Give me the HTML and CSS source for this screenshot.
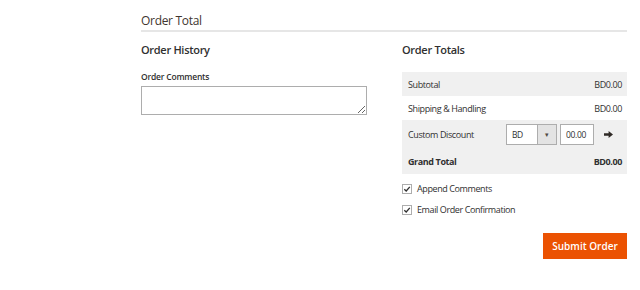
FILE: index.html
```html
<!DOCTYPE html>
<html lang="en">

<head>
    <meta charset="UTF-8">
    <meta name="viewport" content="width=device-width, initial-scale=1.0">
    <title>Order Total</title>
    <link rel="stylesheet" href="styles.css">
</head>

<body>
    <div class="order_total">
        <div class="section_title">Order Total</div>
        <div class="columns">
            <!-- 左侧：订单历史 -->
            <div class="history">
                <h3>Order History</h3>
                <label class="field_label" for="comment">Order Comments</label>
                <textarea id="comment" class="comment"></textarea>
            </div>
            <!-- 右侧：订单合计 -->
            <div class="totals">
                <h3>Order Totals</h3>
                <div class="totals_table">
                    <div class="row gray">
                        <span>Subtotal</span>
                        <span>BD0.00</span>
                    </div>
                    <div class="row">
                        <span>Shipping &amp; Handling</span>
                        <span>BD0.00</span>
                    </div>
                    <div class="row gray discount">
                        <span>Custom Discount</span>
                        <div class="discount_ctrl">
                            <div class="currency">
                                <span class="currency_val">BD</span>
                                <span class="currency_btn">&#9662;</span>
                            </div>
                            <input type="text" class="amount" value="00.00">
                            <svg class="go" width="9" height="7" viewBox="0 0 9 7">
                                <path d="M0 2.2 H4.6 V0 L9 3.5 L4.6 7 V4.8 H0 Z" fill="#2f2a26" />
                            </svg>
                        </div>
                    </div>
                    <div class="row gray grand">
                        <span>Grand Total</span>
                        <span>BD0.00</span>
                    </div>
                </div>
                <label class="check">
                    <span class="box"><svg width="8" height="8" viewBox="0 0 8 8"><path d="M1.3 4.2 L3.2 6 L6.8 1.8" fill="none" stroke="#303030" stroke-width="1.3" /></svg></span>
                    Append Comments
                </label>
                <label class="check">
                    <span class="box"><svg width="8" height="8" viewBox="0 0 8 8"><path d="M1.3 4.2 L3.2 6 L6.8 1.8" fill="none" stroke="#303030" stroke-width="1.3" /></svg></span>
                    Email Order Confirmation
                </label>
                <div class="actions">
                    <a href="javascript:;" class="submit">Submit Order</a>
                </div>
            </div>
        </div>
    </div>
</body>

</html>
```

FILE: styles.css
```css
* {
    margin: 0;
    padding: 0;
    box-sizing: border-box;
}

body {
    font-family: 'Open Sans', 'Liberation Sans', sans-serif;
    color: #303030;
    background-color: #fff;
}

.order_total {
    width: 486px;
    margin-left: 141px;
    padding-top: 12px;
}

.section_title {
    font-size: 12px;
    letter-spacing: -0.3px;
    line-height: 17px;
    color: #41362f;
    padding-bottom: 1px;
    border-bottom: 2px solid #e6e6e6;
}

.columns {
    display: grid;
    grid-template-columns: 1fr 1fr;
    gap: 35px;
    margin-top: 10px;
}

h3 {
    font-size: 11px;
    letter-spacing: -0.3px;
    font-weight: 600;
    line-height: 16px;
    color: #303030;
}

.field_label {
    display: block;
    margin-top: 12px;
    font-size: 8.5px;
    letter-spacing: -0.2px;
    font-weight: 600;
    line-height: 14px;
}

.comment {
    display: block;
    width: 226px;
    height: 29px;
    margin-top: 2px;
    border: 1px solid #adadad;
    resize: vertical;
}

.totals_table {
    margin-top: 14px;
    font-size: 9px;
    letter-spacing: -0.4px;
}

.row {
    display: flex;
    justify-content: space-between;
    align-items: center;
    height: 24px;
    padding: 0 5px 0 6px;
}

.gray {
    background-color: #f0f0f0;
}

.discount {
    height: 28px;
}

.grand {
    height: 26px;
    font-weight: 700;
}

.discount_ctrl {
    display: flex;
    align-items: center;
}

.currency {
    display: flex;
    height: 21px;
    border: 1px solid #adadad;
    background-color: #fff;
}

.currency_val {
    width: 30px;
    padding-left: 5px;
    line-height: 19px;
    font-size: 8.5px;
}

.currency_btn {
    width: 19px;
    border-left: 1px solid #adadad;
    background-color: #e3e3e3;
    text-align: center;
    line-height: 19px;
    font-size: 7px;
    color: #514943;
}

.amount {
    width: 34px;
    height: 21px;
    margin-left: 3px;
    padding-left: 5px;
    border: 1px solid #adadad;
    font-family: inherit;
    font-size: 8.5px;
    letter-spacing: -0.3px;
    color: #303030;
}

.go {
    margin: 0 9px 0 10px;
}

.check {
    display: flex;
    align-items: center;
    gap: 5px;
    font-size: 9px;
    letter-spacing: -0.4px;
    line-height: 12px;
    margin-top: 9px;
}

.box {
    display: flex;
    align-items: center;
    justify-content: center;
    width: 10px;
    height: 10px;
    border: 1px solid #adadad;
    background-color: #fff;
}

.actions {
    display: flex;
    justify-content: flex-end;
    margin-top: 17px;
}

.submit {
    display: inline-block;
    width: 84px;
    height: 26px;
    line-height: 26px;
    background-color: #eb5202;
    color: #fff;
    font-size: 10px;
    font-weight: 600;
    text-align: center;
    text-decoration: none;
}
```
